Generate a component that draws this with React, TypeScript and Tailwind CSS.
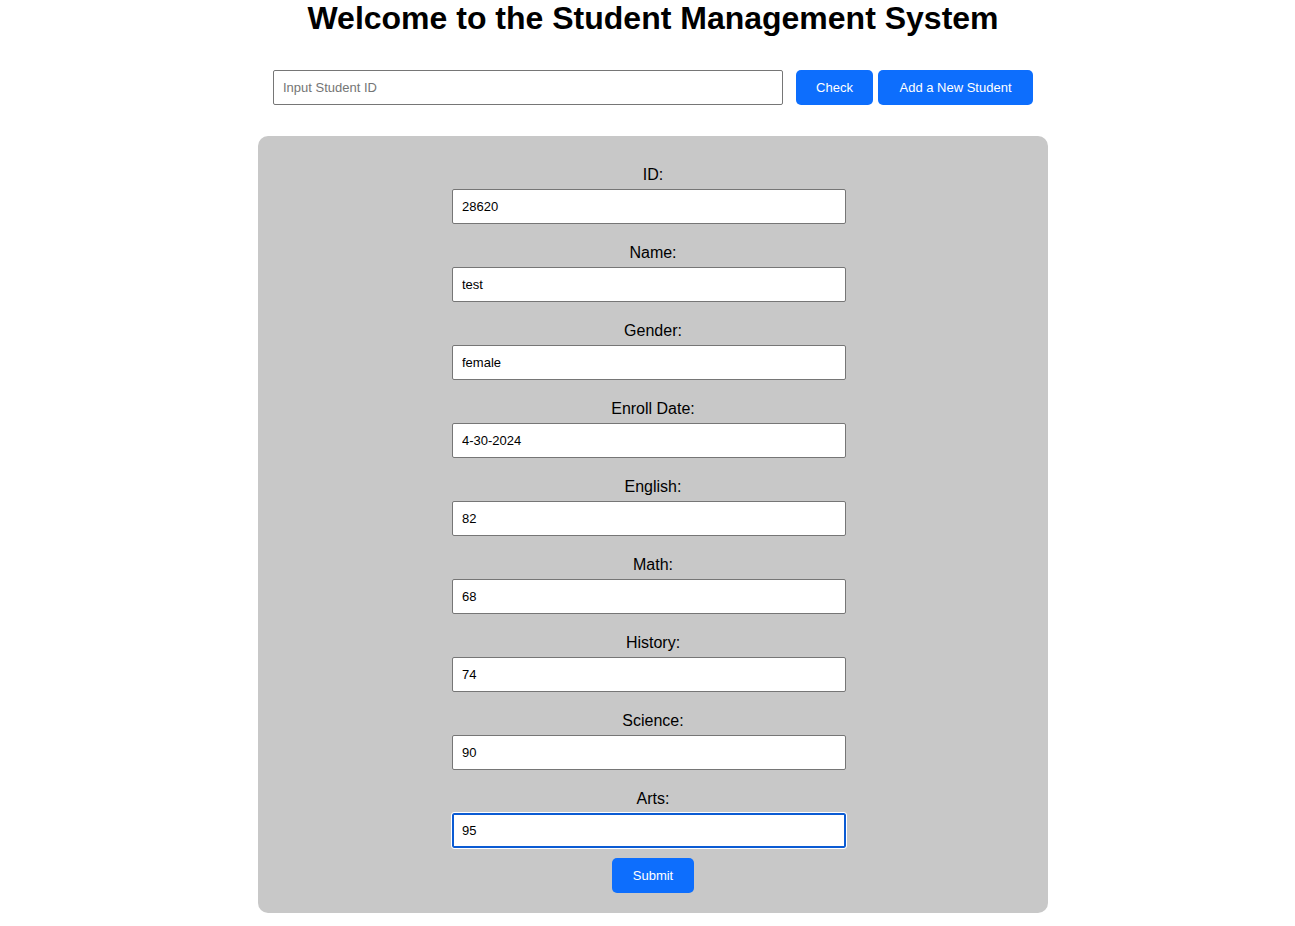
import { useState } from 'react'

const fields = [
  { label: 'ID:', value: '28620' },
  { label: 'Name:', value: 'test' },
  { label: 'Gender:', value: 'female' },
  { label: 'Enroll Date:', value: '4-30-2024' },
  { label: 'English:', value: '82' },
  { label: 'Math:', value: '68' },
  { label: 'History:', value: '74' },
  { label: 'Science:', value: '90' },
  { label: 'Arts:', value: '95' },
]

export default function App() {
  const [values, setValues] = useState(fields.map(f => f.value))
  const [query, setQuery] = useState('')

  return (
    <div className="min-h-screen bg-white pl-[11px] font-['Liberation_Sans',Arial,sans-serif] text-black">
      <h1 className="m-0 text-center text-[32px] font-bold leading-[36px]">
        Welcome to the Student Management System
      </h1>

      <div className="mt-[34px] flex justify-center">
        <input
          value={query}
          onChange={e => setQuery(e.target.value)}
          placeholder="Input Student ID"
          className="h-[35px] w-[510px] rounded-[2px] border border-[#767676] px-[9px] text-[13px] placeholder:text-[#757575] outline-none"
        />
        <button className="ml-[13px] h-[35px] w-[77px] rounded-[5px] bg-[#0d6efd] text-[13px] text-white">
          Check
        </button>
        <button className="ml-[5px] h-[35px] w-[155px] rounded-[5px] bg-[#0d6efd] text-[13px] text-white">
          Add a New Student
        </button>
      </div>

      <div className="mx-auto mt-[31px] flex w-[790px] flex-col items-center rounded-[10px] bg-[#c8c8c8] pt-[29px] pb-[20px]">
        {fields.map((f, i) => {
          const focused = i === fields.length - 1
          return (
            <div key={f.label} className={`flex flex-col items-center ${i > 0 ? 'mt-[19px]' : ''}`}>
              <label className="pt-[1px] text-[16px] leading-[18px]">{f.label}</label>
              <input
                value={values[i]}
                onChange={e => {
                  const next = [...values]
                  next[i] = e.target.value
                  setValues(next)
                }}
                className={
                  focused
                    ? 'mt-[5px] mr-[8px] h-[35px] w-[394px] rounded-[2px] border-2 border-[#0b5bd3] bg-white px-[8px] text-[13px] outline outline-1 outline-white'
                    : 'mt-[5px] mr-[8px] h-[35px] w-[394px] rounded-[2px] border border-[#767676] bg-white px-[9px] text-[13px] outline-none'
                }
              />
            </div>
          )
        })}
        <button className="mt-[10px] h-[35px] w-[82px] rounded-[5px] bg-[#0d6efd] text-[13px] text-white">
          Submit
        </button>
      </div>
    </div>
  )
}
